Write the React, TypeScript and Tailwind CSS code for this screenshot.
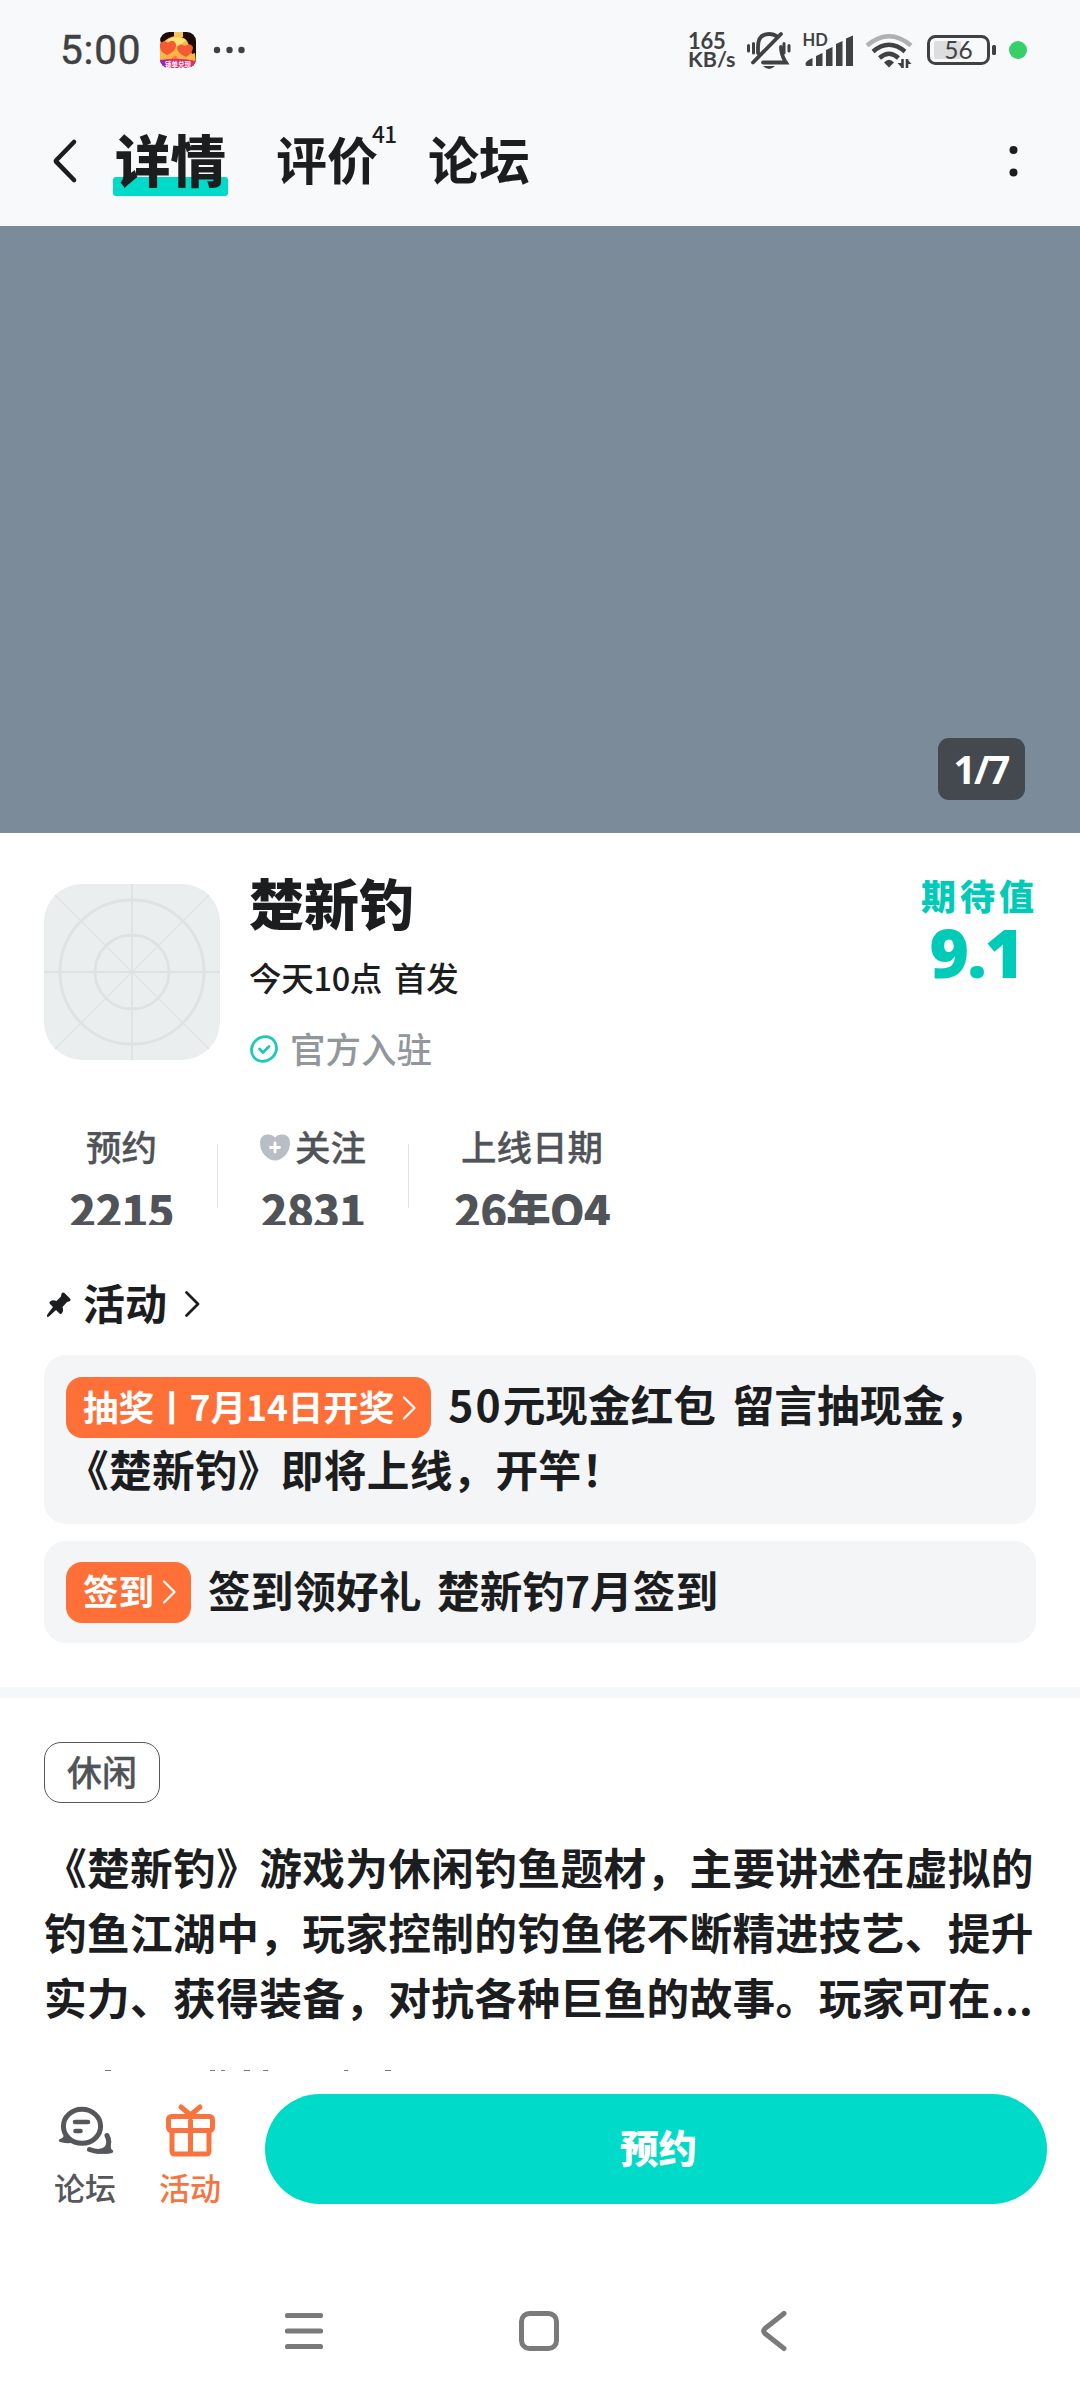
import type { ReactNode } from "react";

const stats = [
  { label: "预约", value: "2215", box: "w-[155px] mr-[18px]" },
  { label: "关注", value: "2831", box: "w-[190px]", heart: true },
  { label: "上线日期", value: "26年Q4", box: "w-[246px]" },
];

const description = [
  "《楚新钓》游戏为休闲钓鱼题材，主要讲述在虚拟的",
  "钓鱼江湖中，玩家控制的钓鱼佬不断精进技艺、提升",
];

function StatusBar() {
  return (
    <div className="flex h-[100px] items-center pl-[60px] pr-[53px] text-[#3f4143]">
      <span className="w-[100px] font-[Roboto] text-[40.500px] leading-none tracking-[0.800px] [-webkit-text-stroke:0.500px]">5:00</span>
      <svg width="36" height="36" viewBox="0 0 36 36">
        <defs>
          <clipPath id="appIcon">
            <rect width="36" height="36" rx="9" />
          </clipPath>
        </defs>
        <g clipPath="url(#appIcon)">
          <rect width="36" height="36" fill="#1c0a05" />
          <path d="M14 0h9v5h-9z" fill="#f7c555" />
          <path d="M2 12Q8 4 17 4Q27 5 29 13L32 22L35 21L36 31H0V8Z" fill="#fcb644" />
          <path d="M7 8Q17 2 26 8L20 14H14Z" fill="#ffe07a" />
          <path d="M0 12Q3 7 8 11Q13 6 16 12Q17 19 7 23Q-1 20 0 12Z" fill="#f55a35" />
          <path d="M17 16Q19 10 25 14Q30 10 33 15Q33 21 26 25Q18 22 17 16Z" fill="#f55a35" />
          <path d="M12 26Q15 21 18 26L16 29H12Z" fill="#f98040" />
          <path d="M0 28Q18 25 36 29V36H0Z" fill="#e8286f" />
          <path d="M0 28L8 28L6 36H0Z" fill="#a21fc4" />
        </g>
        <text x="18" y="34.500" textAnchor="middle" fontSize="6.500" fontWeight="700" fill="#fff" fontFamily="Noto Sans CJK SC, sans-serif">
          锁单兑现
        </text>
      </svg>
      <svg className="ml-[17px]" width="34" height="8" fill="currentColor">
        <circle cx="4" cy="4" r="3.2" />
        <circle cx="16.500" cy="4" r="3.2" />
        <circle cx="28.500" cy="4" r="3.2" />
      </svg>
      <div className="ml-auto flex items-center">
        <div className="w-[58px] font-[Lato] text-[22px] font-bold leading-[18.500px]">
          <div className="tracking-[-0.300px]">165</div>
          <div className="text-[21.500px]">KB/s</div>
        </div>
        {/* muted bell */}
        <svg width="46" height="40" viewBox="746 30 46 40" fill="none" stroke="currentColor" strokeWidth="3.800" strokeLinecap="round">
          <path d="M758 53V47Q758 34 769 34Q774 34 777 36.500M781 47Q781 54 785 61L786 62.500H763M753 62.500L781 34" />
          <path d="M748.500 45.500V51M753.500 43.500V53M784 43.500V53M789 45.500V51" strokeWidth="3" />
          <path d="M763 66H775Q769 72 763 66Z" fill="currentColor" stroke="none" />
        </svg>
        {/* signal */}
        <svg className="ml-[10px]" width="52" height="40" viewBox="802 30 52 40" fill="currentColor">
          <text x="802.500" y="46" fontFamily="Lato" fontWeight="700" fontSize="16.500">HD</text>
          <path d="M805.500 64Q805.500 61 812.500 58V66H807Q805.500 66 805.500 64ZM816 56L822.500 53V66H816ZM826 50L832.500 47V66H826ZM836 44L842.500 41V66H836ZM846 38.500L853 35.500V66H846Z" />
        </svg>
        {/* wifi */}
        <svg className="ml-[11px]" width="48" height="40" viewBox="865 30 48 40" fill="none" stroke="currentColor" strokeWidth="4.400">
          <path d="M867 45.500Q889 27 911 45.500" stroke="#aeb0b2" />
          <path d="M873 51.500Q889 38 905 51.500" />
          <path d="M879.500 58Q889 49.500 898.500 58" />
          <path d="M884 62.500Q889 57 894 62.500L889 67.500Z" fill="currentColor" stroke="none" />
          <path d="M902.500 59V68M907 59V68" strokeWidth="2.600" />
          <path d="M897.500 63L902 68V63ZM911.500 64L907 59V64Z" fill="currentColor" stroke="none" />
        </svg>
        <svg className="ml-[13px]" width="72" height="32" viewBox="926 34 72 32">
          <rect x="934" y="41" width="27" height="18" rx="2" fill="#dcddde" />
          <rect x="928.500" y="36.500" width="60" height="27" rx="7" fill="none" stroke="currentColor" strokeWidth="3" />
          <rect x="992" y="45" width="4" height="10" rx="1.500" fill="currentColor" />
          <text x="958.500" y="58.500" textAnchor="middle" fontFamily="Lato" fontSize="24.500" fill="currentColor">56</text>
        </svg>
        <span className="ml-[11px] size-[18px] rounded-full bg-[#37d067]" />
      </div>
    </div>
  );
}

function TopTabs() {
  return (
    <div className="flex h-[126px] items-center pl-[52px] pr-[62px] pb-[5px] text-[#1c1d1f]">
      <svg width="26" height="46" viewBox="0 0 26 46" fill="none" stroke="currentColor" strokeWidth="4.600" strokeLinecap="round" strokeLinejoin="round">
        <path d="M22 4L4.500 22Q3.500 23 4.500 24L22 42" />
      </svg>
      <div className="relative ml-[35px] flex w-[115px] justify-center whitespace-nowrap pb-[6px] text-[55.500px] font-black leading-[60px]">
        <span className="absolute inset-x-0 top-[49px] h-[19px] rounded-[3px] bg-[#00dac8]" />
        <span className="relative">详情</span>
      </div>
      <div className="ml-[48px] flex w-[152px] whitespace-nowrap pb-[6px] text-[51px] font-bold leading-[60px]">
        评价
        <span className="-ml-[6px] -mt-[7px] text-[22.500px] font-medium leading-[24px] tracking-[-0.700px]">41</span>
      </div>
      <span className="pb-[6px] text-[51px] font-bold leading-[60px]">论坛</span>
      <svg className="ml-auto" width="9" height="32" fill="currentColor">
        <circle cx="4.500" cy="5" r="4" />
        <circle cx="4.500" cy="27.500" r="4" />
      </svg>
    </div>
  );
}

function IconPlaceholder() {
  return (
    <svg width="176" height="176" viewBox="0 0 176 176" fill="none" stroke="#dee2e2">
      <rect width="176" height="176" rx="38" fill="#eaeeef" stroke="none" />
      <path d="M88 0V176M0 88H176" strokeWidth="1.800" />
      <path d="M11 11L165 165M165 11L11 165" strokeWidth="1.200" />
      <circle cx="88" cy="88" r="72" strokeWidth="2.800" />
      <circle cx="88" cy="88" r="37" strokeWidth="2.800" />
    </svg>
  );
}

function GameInfo() {
  return (
    <div className="flex h-[259px] px-[44px] pt-[51px]">
      <IconPlaceholder />
      <div className="ml-[29px] -mt-[19px] flex flex-col text-[#1c1d1f]">
        <h1 className="text-[55px] font-black leading-[72px]">楚新钓</h1>
        <p className="mt-[16px] text-[32.500px] font-medium leading-[48px] tracking-[-0.300px] [word-spacing:5px]">今天10点 首发</p>
        <div className="mt-[21px] flex items-center text-[35.500px] font-medium leading-[52px] text-[#92979c]">
          <svg className="ml-px mr-[12px] mt-[2px]" width="28" height="28" viewBox="0 0 28 28" fill="none" stroke="#1bcab8" strokeWidth="2.800" strokeLinecap="round" strokeLinejoin="round">
            <ellipse cx="14" cy="14" rx="13" ry="11.800" transform="rotate(-40 14 14)" />
            <path d="M9.500 14L13 17.500L19 11.500" />
          </svg>
          官方入驻
        </div>
      </div>
      <div className="ml-auto -mt-[10px] flex flex-col items-center text-[#00cbb8]">
        <span className="-mr-[2px] text-[35px] font-black leading-[42px] tracking-[4px]">期待值</span>
        <span className="mr-[5px] mt-[6px] font-['Noto_Sans'] text-[68px] font-black leading-[60px] tracking-[-2px]">9.1</span>
      </div>
    </div>
  );
}

function Stats() {
  return (
    <div className="ml-[44px] flex h-[133px] overflow-hidden pt-[28px] text-[#505357]">
      {stats.map((s, i) => (
        <div key={s.label} className="flex">
          {i > 0 && <span className="mt-[24px] h-[64px] w-px bg-[#e0e2e4]" />}
          <div className={`flex flex-col items-center ${s.box}`}>
            <div className="flex items-center text-[35.500px] font-medium leading-[52px] [-webkit-text-stroke:0.300px]">
              {s.heart && (
                <svg className="mr-[5px] mt-[2px]" width="30" height="27" viewBox="0 0 30 27">
                  <path d="M15 3.500C17 1 20 0.500 23 0.500C27 0.500 30 4 30 9C30 19 22 26.500 15 26.500S0 19 0 9C0 4 3 0.500 7 0.500C10 0.500 13 1 15 3.500Z" fill="#b9bec6" />
                  <path d="M15 9V18M10.500 13.500H19.500" stroke="#fff" strokeWidth="2.800" strokeLinecap="round" />
                </svg>
              )}
              {s.label}
            </div>
            <div className="mt-[5px] whitespace-nowrap text-[44.500px] font-black leading-[64px] tracking-[-1px]">{s.value}</div>
          </div>
        </div>
      ))}
    </div>
  );
}

function Badge({ children }: { children: ReactNode }) {
  return (
    <span className="mr-[17px] flex h-[61px] shrink-0 items-center rounded-[16px] bg-[#ff7038] pl-[17px] pr-[14px] text-[35.500px] font-bold text-white">
      <span className="pb-[4px] leading-none">{children}</span>
      <svg className="ml-[8px]" width="15" height="26" viewBox="0 0 15 26" fill="none" stroke="currentColor" strokeWidth="2.200" strokeLinecap="round" strokeLinejoin="round">
        <path d="M2 2.500L12.500 13L2 23.500" />
      </svg>
    </span>
  );
}

function Activities() {
  return (
    <section className="px-[44px] text-[#1c1d1f]">
      <div className="mt-[49px] flex h-[60px] items-center text-[42px] font-bold leading-[60px]">
        <svg className="mr-[11px]" width="28" height="28" viewBox="0 0 28 28" fill="currentColor">
          <path d="M17.500 3.500Q19 1.500 21 3.500L26 8.500Q27.500 10.500 25 11.500L23 12L18.500 17Q20 21 17.500 23.500Q16.500 24.500 15.500 23.500L12 20L5.500 26Q3.500 27.500 3 26.500Q2.500 25.500 4 23.500L9 17L6 14Q4.500 12.500 6 11.500Q9 9.500 12.500 11L17 6.500Z" />
        </svg>
        <span className="-mt-[5px]">活动</span>
        <svg className="ml-[17px]" width="17" height="28" viewBox="0 0 17 28" fill="none" stroke="currentColor" strokeWidth="2.800" strokeLinecap="round" strokeLinejoin="round">
          <path d="M2.500 2.500L14 14L2.500 25.500" />
        </svg>
      </div>
      <div className="mt-[21px] h-[169px] rounded-[22px] bg-[#f4f5f7] px-[22px] pt-[22px] text-[42.670px] font-bold">
        <div className="flex h-[61px] items-center">
          <Badge>抽奖丨7月14日开奖</Badge>
          <span className="whitespace-nowrap pb-[7px] [word-spacing:6px]">
            <span className="tracking-[2px]">50</span>元现金红包 留言抽现金，
          </span>
        </div>
        <div className="-mt-[1px] whitespace-nowrap leading-[64px] tracking-[0.300px]">《楚新钓》即将上线，开竿！</div>
      </div>
      <div className="mt-[17px] flex h-[102px] items-center rounded-[22px] bg-[#f4f5f7] px-[22px] text-[42.670px] font-bold">
        <Badge>签到</Badge>
        <span className="whitespace-nowrap pb-[5px] [word-spacing:6px]">签到领好礼 楚新钓7月签到</span>
      </div>
    </section>
  );
}

function BottomBar() {
  return (
    <div className="flex h-[180px] items-start pl-[44px] pr-[33px] pt-[22px]">
      <div className="flex w-[82px] flex-col items-center text-[31px] font-medium text-[#55575b]">
        <svg className="ml-px mt-[12px]" width="58" height="52" viewBox="57 2106 58 52" fill="none" stroke="currentColor" strokeWidth="5" strokeLinecap="round" strokeLinejoin="round">
          <ellipse cx="82" cy="2126.300" rx="18.600" ry="17" />
          <path d="M64 2134Q64 2138 60 2139Q57.500 2140.500 60 2142Q66 2144 74 2142.500Z" fill="currentColor" stroke="none" />
          <path d="M75 2122H88M75.500 2131H80.500" strokeWidth="4.600" />
          <path d="M107 2135.500Q110.500 2142 107 2148Q101 2154 89.500 2149.500" />
          <path d="M111 2145Q110 2149 113 2150.500Q114 2152 112 2153Q106 2154.500 100 2153.500Z" fill="currentColor" stroke="none" />
        </svg>
        <span className="mt-[7px] leading-[44px]">论坛</span>
      </div>
      <div className="ml-[23px] flex w-[82px] flex-col items-center text-[31px] font-medium text-[#f97340]">
        <svg className="ml-px mt-[8px]" width="52" height="56" viewBox="165 2102 52 56" fill="none" stroke="currentColor" strokeWidth="5" strokeLinecap="round" strokeLinejoin="round">
          <path d="M181 2107L190.500 2115L200 2107" />
          <rect x="168.500" y="2116.500" width="44" height="14" rx="3" />
          <path d="M172 2131V2151Q172 2154 175 2154H206Q209 2154 209 2151V2131M190.500 2121V2153" />
        </svg>
        <span className="mt-[7px] leading-[44px]">活动</span>
      </div>
      <button className="ml-[34px] h-[110px] grow rounded-full bg-[#00dac8] pb-[5px] pl-[5px] text-[38.500px] font-black text-white">预约</button>
    </div>
  );
}

function SystemNav() {
  return (
    <div className="flex items-center pl-[284px] pt-[58px] text-[#7a7a7a]">
      <svg width="40" height="42" fill="none" stroke="currentColor" strokeWidth="5.200" strokeLinecap="round">
        <path d="M3.500 5.500H36.500M3.500 21H36.500M3.500 36.500H36.500" />
      </svg>
      <svg className="ml-[194px]" width="42" height="42" fill="none" stroke="currentColor" strokeWidth="5">
        <rect x="3.500" y="3.500" width="35" height="35" rx="8" />
      </svg>
      <svg className="ml-[200px]" width="28" height="42" fill="none" stroke="currentColor" strokeWidth="5" strokeLinecap="round" strokeLinejoin="round">
        <path d="M24 3.500L5 18.500Q2.500 21 5 23.500L24 38.500" />
      </svg>
    </div>
  );
}

export default function App() {
  return (
    <div lang="zh-CN" className="h-[2400px] w-[1080px] overflow-hidden bg-white font-['Noto_Sans_CJK_SC',sans-serif]">
      <header className="h-[226px] bg-[#f7f9fb]">
        <StatusBar />
        <TopTabs />
      </header>
      <div className="flex h-[607px] items-end justify-end bg-[#7b8b99] pb-[33px] pr-[55px]">
        <span className="flex h-[62px] w-[87px] items-center justify-center rounded-[11px] bg-[#44494f] pr-px font-['Noto_Sans'] text-[39px] font-bold tracking-[-2px] text-white">
          1/7
        </span>
      </div>
      <GameInfo />
      <Stats />
      <Activities />
      <div className="mt-[44px] h-[11px] bg-[#f5f7fa]" />
      <section className="h-[374px] overflow-hidden px-[44px] pt-[44px] text-[#1c1d1f]">
        <span className="flex h-[61px] w-[116px] items-center justify-center rounded-[17px] border border-[#55585c] pb-[2px] text-[35px] font-medium text-[#505357] [-webkit-text-stroke:0.300px]">
          休闲
        </span>
        <div className="mt-[31px] whitespace-nowrap text-[42.670px] font-bold leading-[65px] tracking-[0.380px]">
          {description.map((line) => (
            <p key={line}>{line}</p>
          ))}
          <p>
            实力、获得装备，对抗各种巨鱼的故事。玩家可在<span className="tracking-[0.300px]">...</span>
          </p>
        </div>
        {/* top edge of the next line, cut by the bottom bar */}
        <svg className="mt-[41px]" width="360" height="2" fill="none" stroke="#77797b">
          <path d="M61 0.500H67M166 0.500H171M177 0.500H181M200 0.500H206M219 0.500H224M300 0.500H304M341 0.500H347" />
        </svg>
      </section>
      <BottomBar />
      <SystemNav />
    </div>
  );
}
